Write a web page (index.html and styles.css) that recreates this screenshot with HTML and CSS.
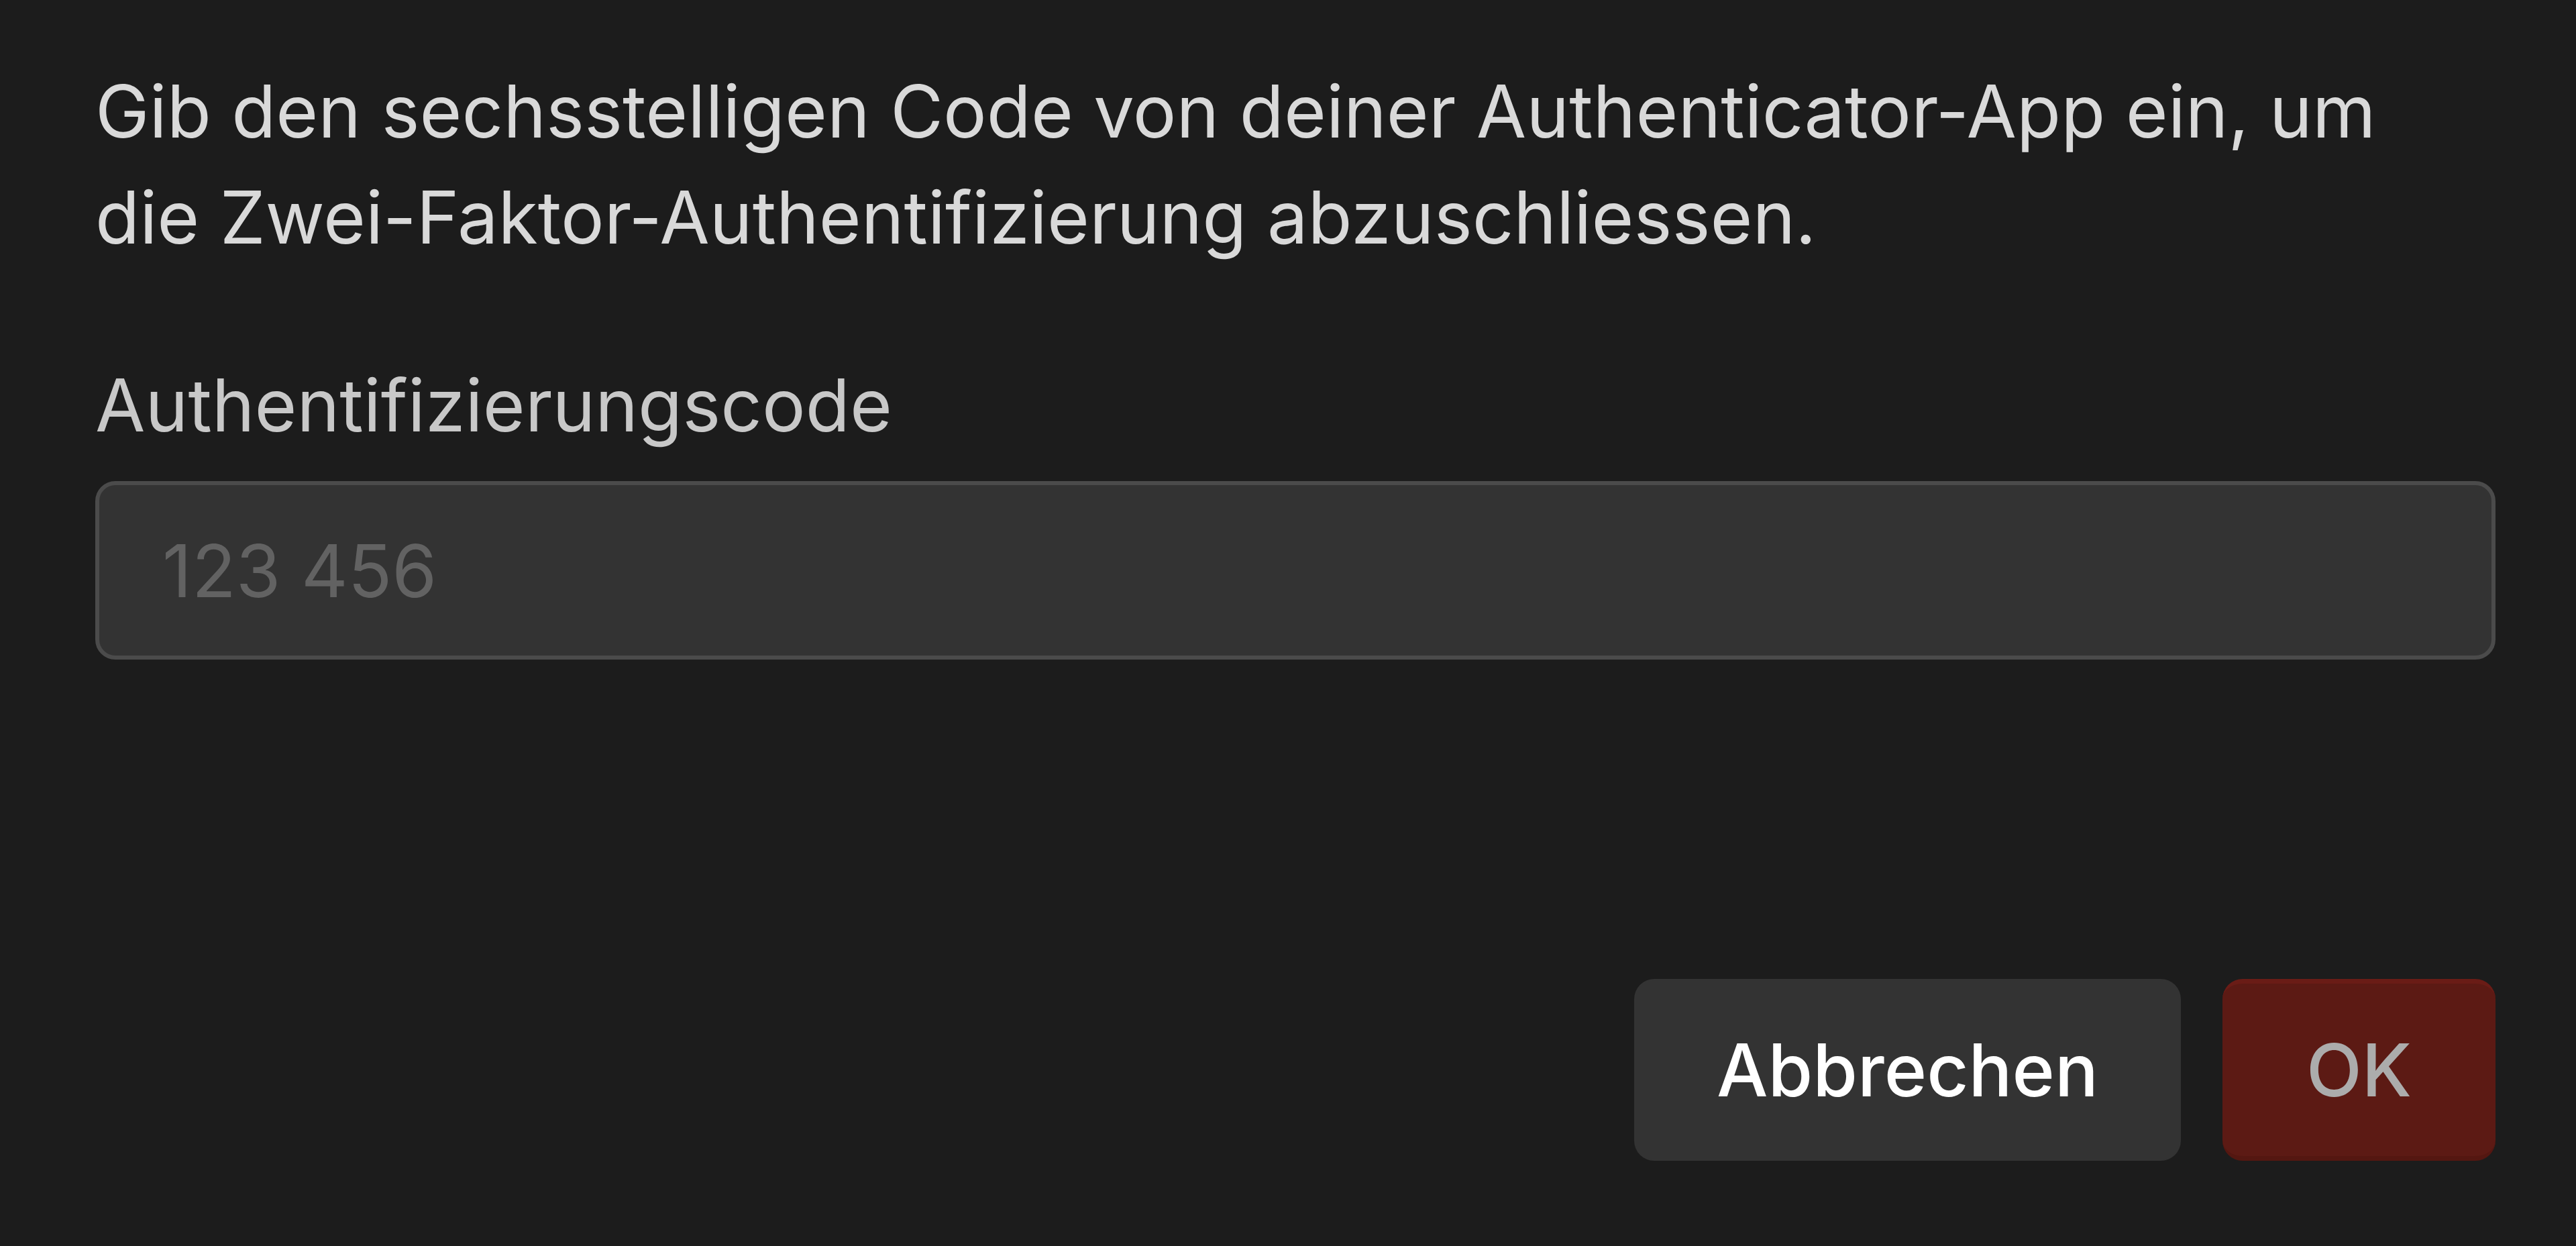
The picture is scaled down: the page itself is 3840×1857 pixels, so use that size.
FILE: index.html
```html
<!DOCTYPE html>
<html lang="de">
<head>
<meta charset="utf-8">
<title>Zwei-Faktor-Authentifizierung</title>
<link rel="stylesheet" href="styles.css">
</head>
<body>
<div class="dialog">
  <p class="intro">Gib den sechsstelligen Code von deiner Authenticator-App ein, um die Zwei-Faktor-Authentifizierung abzuschliessen.</p>
  <label class="field-label" for="code">Authentifizierungscode</label>
  <input class="code-input" id="code" type="text" placeholder="123 456">
  <div class="actions">
    <button class="btn btn-secondary" type="button">Abbrechen</button>
    <button class="btn btn-primary" type="button">OK</button>
  </div>
</div>
</body>
</html>
```

FILE: styles.css
```css
html, body {
  margin: 0;
  padding: 0;
  background: #1c1c1c;
}
body {
  font-family: Inter, "Noto Sans", sans-serif;
  font-size: 108px;
  line-height: 158px;
  color: #d9d9d9;
}
.dialog {
  display: flex;
  flex-direction: column;
  padding: 87px 120px 0 142px;
}
.intro {
  margin: 0;
  width: 3480px;
  color: #d9d9d9;
}
.field-label {
  margin-top: 122px;
  color: #c8c8c8;
}
.code-input {
  margin-top: 34px;
  box-sizing: border-box;
  height: 266px;
  width: 100%;
  background: #333333;
  border: 6px solid #4b4b4b;
  border-radius: 30px;
  padding: 0 94px;
  font: inherit;
  color: #d9d9d9;
  outline: none;
}
.code-input::placeholder {
  color: #626262;
}
.actions {
  margin-top: 476px;
  display: flex;
  justify-content: flex-end;
  gap: 62px;
}
.btn {
  box-sizing: border-box;
  height: 271px;
  border-radius: 30px;
  font: inherit;
  font-weight: 500;
  padding: 0;
  border: none;
  text-align: center;
}
.btn-secondary {
  width: 815px;
  background: #333333;
  color: #ffffff;
}
.btn-primary {
  width: 407px;
  background: #5c1a14;
  color: #acacac;
  border-top: 7px solid #6a1c16;
  border-bottom: 7px solid #541711;
}
```
